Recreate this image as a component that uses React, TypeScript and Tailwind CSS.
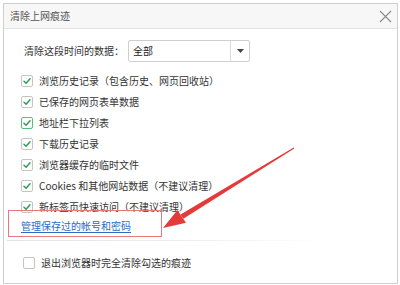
import { ReactNode } from 'react';

const FONT = '"Noto Sans CJK SC", "Noto Sans", sans-serif';

function CheckBox({ checked = true, focused = false }: { checked?: boolean; focused?: boolean }) {
  return (
    <span
      className={`flex h-[12px] w-[12px] shrink-0 items-center justify-center rounded-[2px] border bg-white ${
        focused ? 'border-[#5dbb7f]' : 'border-[#c4c4c4]'
      }`}
    >
      {checked && (
        <svg width="8" height="8" viewBox="0 0 8 8" fill="none">
          <path d="M1 4.2 L3.1 6.2 L7 1.8" stroke="#2f9e57" strokeWidth="1.5" strokeLinecap="round" strokeLinejoin="round" />
        </svg>
      )}
    </span>
  );
}

function Row({ children, focused }: { children: ReactNode; focused?: boolean }) {
  return (
    <div className="flex h-[21px] items-center gap-[6px] pl-[17px]">
      <CheckBox focused={focused} />
      <span className="text-[10px] leading-none text-[#333]">{children}</span>
    </div>
  );
}

const items = [
  '浏览历史记录（包含历史、网页回收站）',
  '已保存的网页表单数据',
  '地址栏下拉列表',
  '下载历史记录',
  '浏览器缓存的临时文件',
  'Cookies 和其他网站数据（不建议清理）',
  '新标签页快速访问（不建议清理）',
];

export default function App() {
  return (
    <div className="relative h-[285px] w-[400px] overflow-hidden bg-white pl-[3px] pt-[3px]" style={{ fontFamily: FONT }}>
      <div className="flex h-[281px] w-[395px] flex-col border border-[#cfcfcf] bg-white">
        {/* Title bar */}
        <div className="flex h-[25px] shrink-0 items-center justify-between border-b border-[#e2e2e2] bg-[#f7f7f7] pl-[6px] pr-[4px]">
          <span className="text-[10px] leading-none text-[#555]">清除上网痕迹</span>
          <svg width="13" height="13" viewBox="0 0 13 13" className="mr-[1px]">
            <path d="M1 1 L12 12 M12 1 L1 12" stroke="#8a8a8a" strokeWidth="1.1" />
          </svg>
        </div>

        {/* Time range */}
        <div className="mt-[11px] flex items-center pl-[20px]">
          <span className="w-[104px] text-[10px] leading-none text-[#333]">清除这段时间的数据：</span>
          <div className="flex h-[22px] w-[122px] items-stretch rounded-[2px] border border-[#cfcfcf] bg-white">
            <span className="flex flex-1 items-center pl-[4px] text-[10px] leading-none text-[#222]">全部</span>
            <span className="flex w-[19px] items-center justify-center border-l border-[#dcdcdc]">
              <svg width="7" height="4" viewBox="0 0 7 4">
                <path d="M0 0 L7 0 L3.5 4 Z" fill="#444" />
              </svg>
            </span>
          </div>
        </div>

        {/* Options */}
        <div className="mt-[8px] flex flex-col">
          {items.map((t, i) => (
            <Row key={t} focused={i === 2}>
              {t}
            </Row>
          ))}
        </div>

        <div className="flex h-[18px] items-center pl-[17px]">
          <span className="text-[10px] leading-none text-[#2b6cc4] underline underline-offset-[2px]">管理保存过的帐号和密码</span>
        </div>

        <div className="ml-[3px] mt-[5px] h-px w-[320px] bg-gradient-to-r from-[#e3e3e3] via-[#ececec] to-transparent" />

        <div className="mt-[11px] flex h-[21px] items-center gap-[6px] pl-[19px]">
          <CheckBox checked={false} />
          <span className="text-[10px] leading-none text-[#333]">退出浏览器时完全清除勾选的痕迹</span>
        </div>
      </div>

      {/* Annotation box */}
      <div className="absolute left-[8px] top-[210px] h-[27px] w-[154px] border border-[#e8797b]" />

      {/* Annotation arrow */}
      <svg className="pointer-events-none absolute left-0 top-0" width="400" height="285" viewBox="0 0 400 285">
        <polygon points="294.3,148.4 293.7,147.6 180.5,214.5 183.3,218.8" fill="#e53a3a" />
        <polygon points="163,228 177.5,210 181.8,216.8 186,222.8" fill="#e53a3a" />
      </svg>
    </div>
  );
}
